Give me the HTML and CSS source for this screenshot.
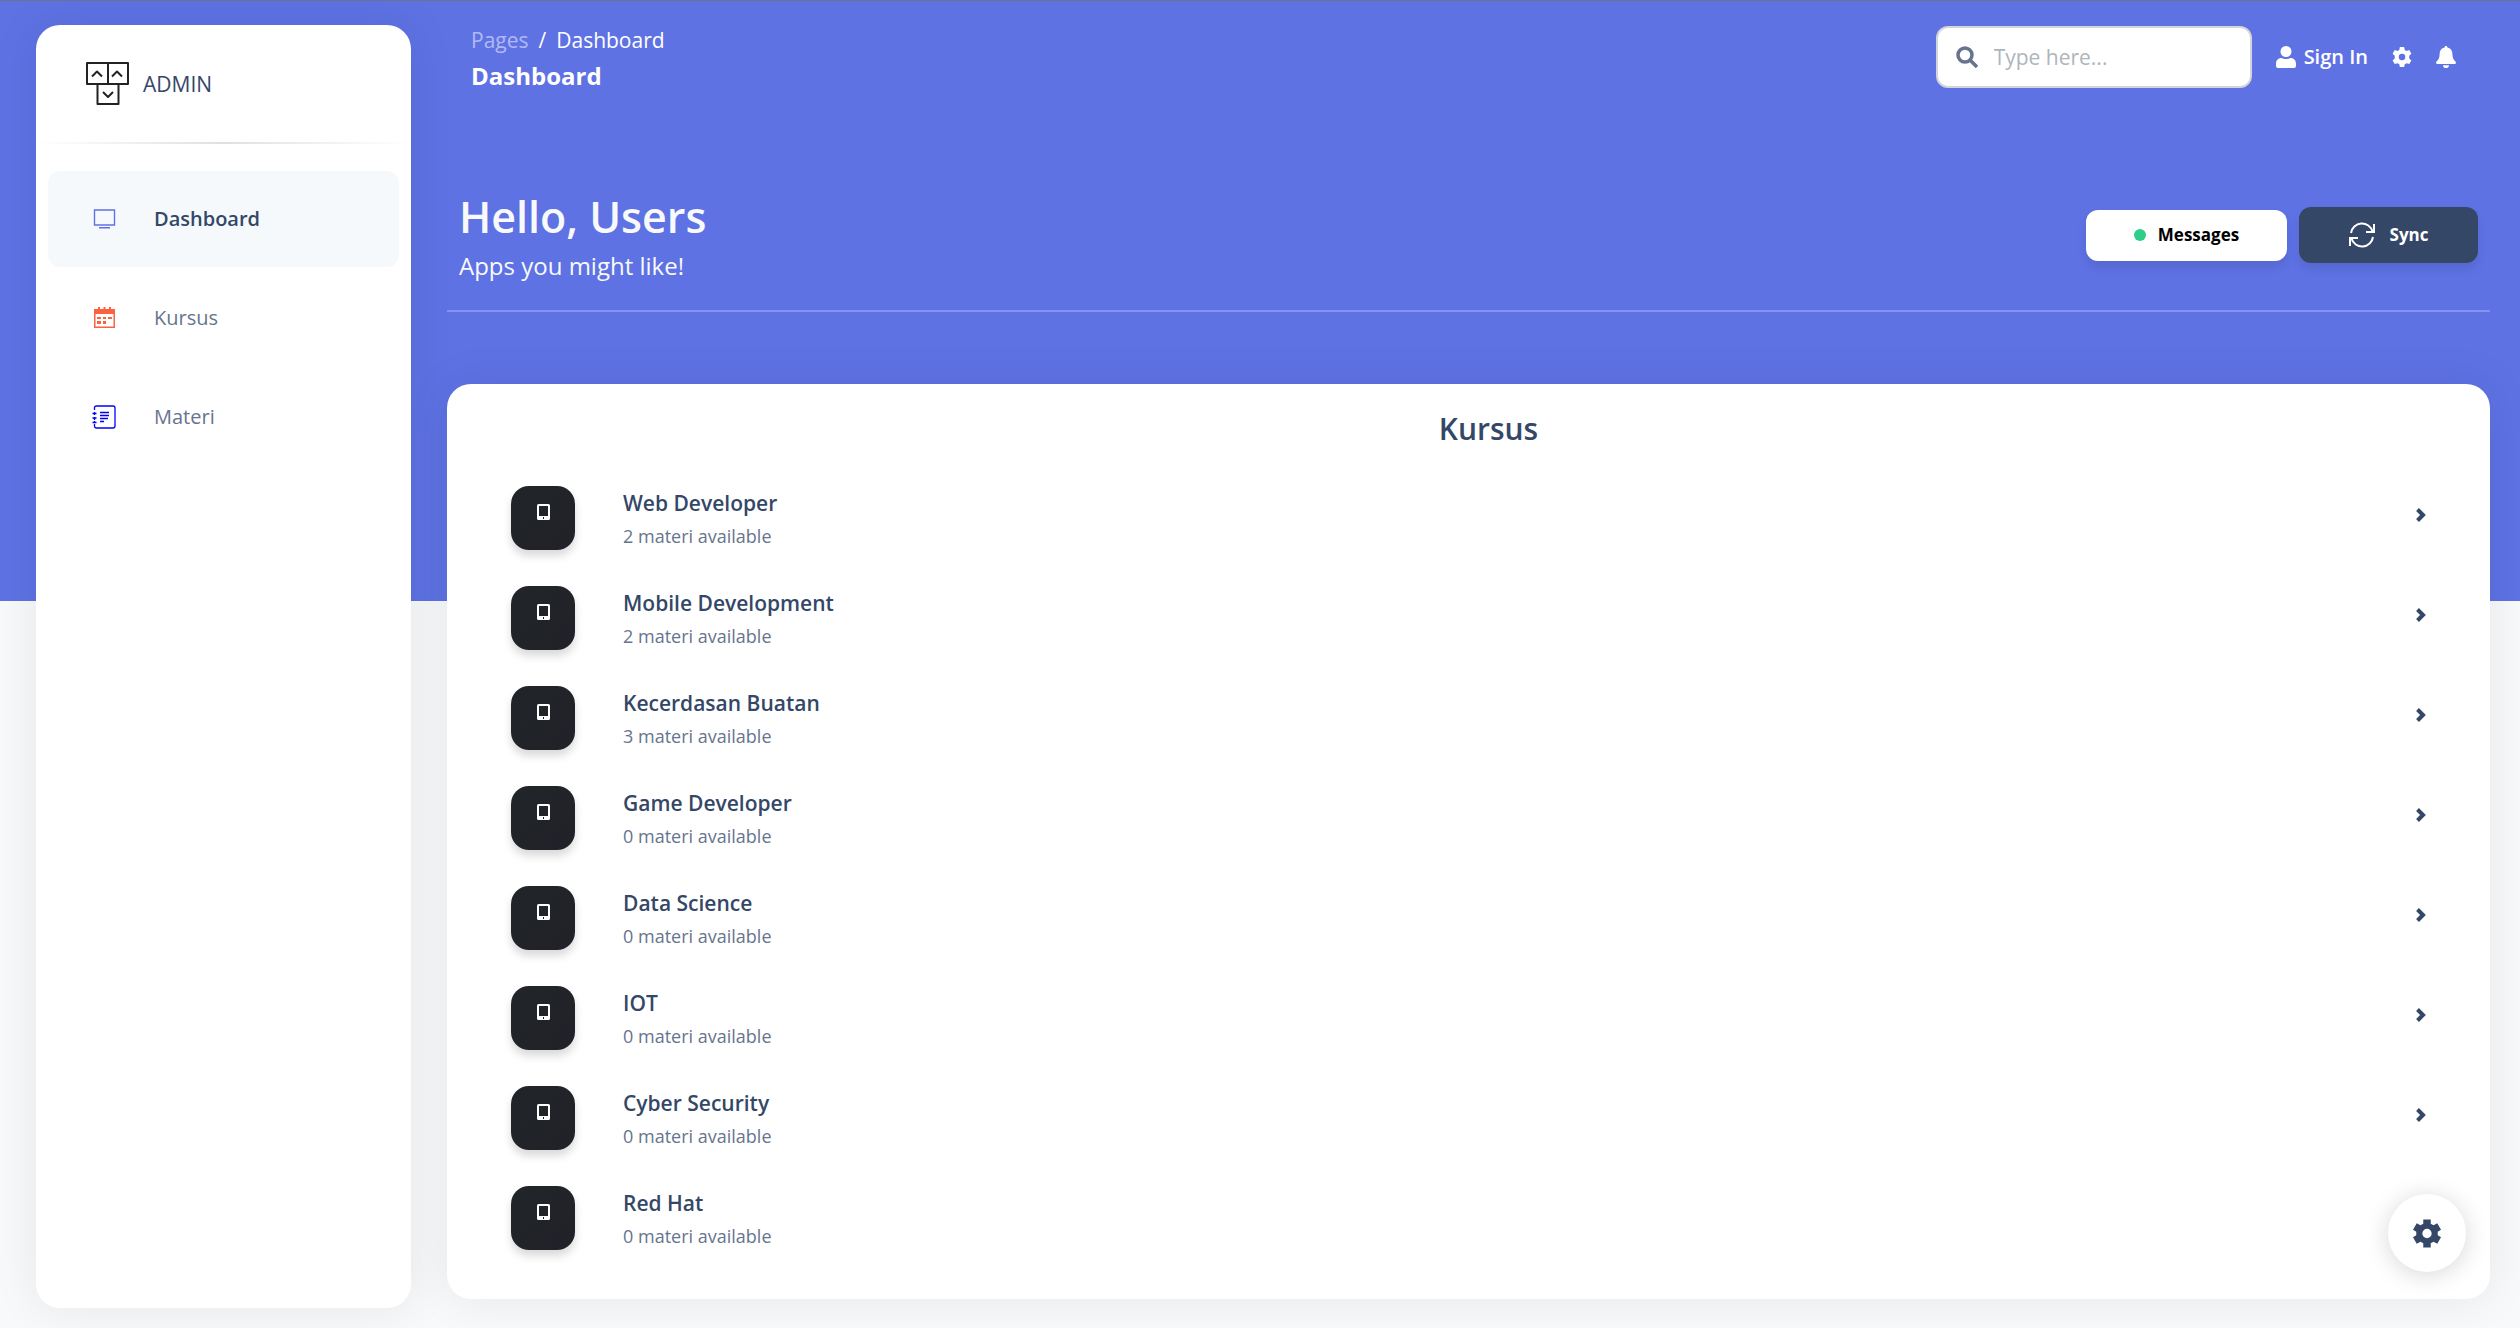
FILE: index.html
```html
<!DOCTYPE html>
<html lang="id">
<head>
<meta charset="utf-8">
<meta name="viewport" content="width=device-width, initial-scale=1">
<title>Dashboard</title>
<link rel="stylesheet" href="styles.css">
</head>
<body>
<svg class="sprite" aria-hidden="true">
  <symbol id="tablet" viewBox="0 0 13 16">
    <path fill="currentColor" fill-rule="evenodd" d="M1.500 0h10A1.500 1.500 0 0 1 13 1.500v13a1.500 1.500 0 0 1-1.500 1.500h-10A1.500 1.500 0 0 1 0 14.500v-13A1.500 1.500 0 0 1 1.500 0zM2 2v10h9V2zM6 13v2h1v-2z"/>
  </symbol>
  <symbol id="chevron" viewBox="0 0 10 14">
    <path fill="none" stroke="currentColor" stroke-width="4" d="M1.500 1.500 7 7l-5.500 5.500"/>
  </symbol>
</svg>

<aside class="sidebar">
  <a class="brand" href="#">
    <svg class="brand-logo" viewBox="0 0 44 44" fill="none" stroke="#222" stroke-width="2" stroke-linejoin="round" aria-hidden="true">
      <path d="M1 1h21v21H1zM22 1h20v21H22zM11.500 22h21v20h-21z"/>
      <path d="M6 14.500l5-5 5 5M26 14.500l5-5 5 5M17 30l5 5 5-5"/>
    </svg>
    <span>ADMIN</span>
  </a>
  <hr class="fade-line">
  <nav class="menu">
    <a class="menu-item active" href="#">
      <svg viewBox="0 0 24 24" fill="none" stroke="#5e72e4" stroke-width="1.400" aria-hidden="true"><path d="M2.500 3h20v15h-20zM7 20.800h11"/></svg>
      <span>Dashboard</span>
    </a>
    <a class="menu-item" href="#">
      <svg viewBox="0 0 24 24" aria-hidden="true"><path fill="#fb6340" fill-rule="evenodd" d="M2 3h4V1h2v2h3.500V1h2v2H17V1h2v2h4v19H2zM3.500 8v12.500h18V8z"/><path fill="#fb6340" d="M5 11h4v2H5zm6 0h3v2h-3zm5 0h4v2h-4zM5 15h4v3H5zm6 0h3v3h-3z"/></svg>
      <span>Kursus</span>
    </a>
    <a class="menu-item" href="#">
      <svg viewBox="0 0 24 24" fill="none" stroke="#0000ff" stroke-width="1.300" aria-hidden="true"><path d="M2.500 5V3q0-2 2-2H21q2 0 2 2v18q0 2-2 2H4.500q-2 0-2-2v-2M2.500 7v3M2.500 12v3M2.500 16v2M.5 8.500h4M.5 13h4M.5 17.500h4M8 7.500h9M8 10.500h9M8 13.500h8M8 16.500h4"/></svg>
      <span>Materi</span>
    </a>
  </nav>
</aside>

<main class="main">
  <header class="topbar">
    <div>
      <nav class="crumbs" aria-label="Breadcrumb"><a href="#">Pages</a><span>/</span><span>Dashboard</span></nav>
      <h6 class="page-name">Dashboard</h6>
    </div>
    <div class="tools">
      <label class="search">
        <svg viewBox="0 0 22 22" fill="none" stroke="currentColor" stroke-width="3.500" aria-hidden="true"><circle cx="9" cy="9" r="7"/><path d="M14 14l7 7"/></svg>
        <input type="text" placeholder="Type here..." aria-label="Search">
      </label>
      <a class="tool" href="#">
        <svg viewBox="0 0 20 22" fill="currentColor" aria-hidden="true"><circle cx="10" cy="5.500" r="5.500"/><path d="M5.500 12c1.500.8 2.800 1 4.500 1s3-.2 4.500-1c3.500 0 5.500 2.500 5.500 5.500V20a2 2 0 0 1-2 2H2a2 2 0 0 1-2-2v-2.500C0 14.500 2 12 5.500 12z"/></svg>
        <span>Sign In</span>
      </a>
      <a class="tool" href="#" aria-label="Settings">
        <svg viewBox="2 2 16 16" aria-hidden="true"><path fill="currentColor" fill-rule="evenodd" d="M8.300 2h3.400l.5 2.300 1.400.8 2.200-.7 1.700 2.900-1.700 1.600v2.200l1.700 1.600-1.700 2.900-2.200-.7-1.400.8-.5 2.300H8.300l-.5-2.300-1.400-.8-2.200.7-1.700-2.900 1.700-1.600V8.900L2.500 7.300l1.700-2.900 2.200.7 1.400-.8zM10 7.400a2.600 2.600 0 1 0 0 5.200 2.600 2.600 0 0 0 0-5.200z"/></svg>
      </a>
      <a class="tool" href="#" aria-label="Notifications">
        <svg viewBox="0 0 20 22" fill="currentColor" aria-hidden="true"><path d="M10 0c.9 0 1.400.6 1.400 1.500 3.300.7 5 3.200 5 6.500 0 4 1 5.500 3 7.500 1 1 .4 2.500-.9 2.500h-17C.2 18-.4 16.500.6 15.500c2-2 3-3.500 3-7.500 0-3.300 1.700-5.800 5-6.500C8.600.6 9.100 0 10 0zM7 19.200h6a3 2.800 0 0 1-6 0z"/></svg>
      </a>
    </div>
  </header>

  <section class="hero">
    <div>
      <h1>Hello, Users</h1>
      <p>Apps you might like!</p>
    </div>
    <div class="actions">
      <button class="btn btn-light" type="button"><span class="dot"></span>Messages</button>
      <button class="btn btn-dark" type="button">
        <svg viewBox="0 0 26 26" fill="none" stroke="currentColor" stroke-width="2" aria-hidden="true"><path d="M2 11A11 11 0 0 1 23.500 9.500M25 2v8h-8M24 15A11 11 0 0 1 2.500 16.500M1 24v-8h8"/></svg>
        Sync
      </button>
    </div>
  </section>

  <section class="card">
    <h2>Kursus</h2>
    <ul class="courses">
      <li><span class="tile"><svg><use href="#tablet"/></svg></span><div class="info"><h3>Web Developer</h3><p>2 materi available</p></div><button class="go" type="button" aria-label="Open Web Developer"><svg><use href="#chevron"/></svg></button></li>
      <li><span class="tile"><svg><use href="#tablet"/></svg></span><div class="info"><h3>Mobile Development</h3><p>2 materi available</p></div><button class="go" type="button" aria-label="Open Mobile Development"><svg><use href="#chevron"/></svg></button></li>
      <li><span class="tile"><svg><use href="#tablet"/></svg></span><div class="info"><h3>Kecerdasan Buatan</h3><p>3 materi available</p></div><button class="go" type="button" aria-label="Open Kecerdasan Buatan"><svg><use href="#chevron"/></svg></button></li>
      <li><span class="tile"><svg><use href="#tablet"/></svg></span><div class="info"><h3>Game Developer</h3><p>0 materi available</p></div><button class="go" type="button" aria-label="Open Game Developer"><svg><use href="#chevron"/></svg></button></li>
      <li><span class="tile"><svg><use href="#tablet"/></svg></span><div class="info"><h3>Data Science</h3><p>0 materi available</p></div><button class="go" type="button" aria-label="Open Data Science"><svg><use href="#chevron"/></svg></button></li>
      <li><span class="tile"><svg><use href="#tablet"/></svg></span><div class="info"><h3>IOT</h3><p>0 materi available</p></div><button class="go" type="button" aria-label="Open IOT"><svg><use href="#chevron"/></svg></button></li>
      <li><span class="tile"><svg><use href="#tablet"/></svg></span><div class="info"><h3>Cyber Security</h3><p>0 materi available</p></div><button class="go" type="button" aria-label="Open Cyber Security"><svg><use href="#chevron"/></svg></button></li>
      <li><span class="tile"><svg><use href="#tablet"/></svg></span><div class="info"><h3>Red Hat</h3><p>0 materi available</p></div><button class="go" type="button" aria-label="Open Red Hat"><svg><use href="#chevron"/></svg></button></li>
    </ul>
  </section>
</main>

<button class="fab" type="button" aria-label="Configure">
  <svg viewBox="0 0 30 30" aria-hidden="true"><path fill="currentColor" fill-rule="evenodd" d="M11 0h8v4.500l3 1.700L26 4l4 7-3.500 2.200v3.600L30 19l-4 7-4-2.200-3 1.700V30h-8v-4.500l-3-1.700L4 26l-4-7 3.500-2.200v-3.600L0 11l4-7 4 2.200 3-1.700zM15 10a5 5 0 1 0 0 10 5 5 0 0 0 0-10z"/></svg>
</button>
</body>
</html>
```
FILE: styles.css
```css
* { box-sizing: border-box; }
body {
  margin: 0;
  min-height: 100vh;
  padding: 24px 30px 20px 36px;
  display: flex;
  gap: 36px;
  border-top: 1px solid #67748e;
  background: linear-gradient(#5e72e4, #5e72e4) 0 0 / 100% 601px no-repeat #f8f9fa;
  font-family: "Open Sans", "Noto Sans", sans-serif;
  font-size: 21px;
  line-height: 32px;
  color: #344767;
}
h1, h2, h3, h6, p, ul { margin: 0; padding: 0; }
a { color: inherit; text-decoration: none; }
button, input { font: inherit; color: inherit; border: 0; }
button { cursor: pointer; }
svg { display: block; flex: none; }
.sprite { position: absolute; width: 0; height: 0; }

.sidebar, .card {
  background: #fff;
  border-radius: 24px;
  box-shadow: 0 0 48px rgba(0, 0, 0, .08);
}
.sidebar { flex: 0 0 375px; }
.brand {
  display: flex;
  align-items: center;
  gap: 13px;
  height: 117px;
  padding-left: 50px;
  font-size: 21px;
  font-weight: 500;
}
.brand-logo { width: 44px; height: 44px; }
.fade-line {
  height: 2px;
  margin: 0 0 27px;
  border: 0;
  background: linear-gradient(90deg, transparent, #e0e0e0, transparent);
}
.menu { display: grid; gap: 3px; padding: 0 12px; }
.menu-item {
  display: flex;
  align-items: center;
  gap: 38px;
  height: 96px;
  padding-left: 44px;
  border-radius: 12px;
  font-size: 20px;
  color: #67748e;
}
.menu-item svg { width: 24px; height: 24px; }
.menu-item.active { background: #f5f9fc; color: #344767; font-weight: 600; }

.main { flex: 1; min-width: 0; }
.topbar {
  display: flex;
  justify-content: space-between;
  align-items: flex-start;
  padding: 0 34px 0 24px;
  color: #fff;
}
.crumbs { display: flex; gap: 10px; line-height: 30px; }
.crumbs a { opacity: .5; }
.page-name { font-size: 24px; line-height: 42px; font-weight: 700; }
.tools { display: flex; align-items: center; gap: 24px; padding-top: 1px; }
.search {
  display: flex;
  align-items: center;
  gap: 16px;
  width: 316px;
  height: 62px;
  padding: 0 18px;
  border: 2px solid #d2d6da;
  border-radius: 12px;
  background: #fff;
  color: #67748e;
}
.search svg { width: 22px; height: 22px; }
.search input { flex: 1; min-width: 0; padding: 0; outline: 0; background: none; }
.search input::placeholder { color: #adb5bd; opacity: 1; }
.tool { display: flex; align-items: center; gap: 8px; font-size: 20px; font-weight: 600; }
.tool svg { width: 20px; height: 22px; }

.hero {
  display: flex;
  justify-content: space-between;
  align-items: center;
  height: 152px;
  margin: 63px 0 72px;
  padding: 0 12px;
  border-bottom: 2px solid #8392ef;
  color: #f8f9fa;
}
.hero h1 { font-size: 43px; line-height: 62px; font-weight: 600; }
.hero p { font-size: 24px; line-height: 36px; }
.actions { display: flex; align-items: center; gap: 12px; }
.btn {
  display: flex;
  align-items: center;
  justify-content: center;
  border-radius: 12px;
  box-shadow: 0 6px 9px rgba(50, 50, 93, .15);
  font-size: 17px;
  font-weight: 700;
}
.btn-light { gap: 12px; width: 201px; height: 51px; background: #fff; color: #000; }
.btn-dark { gap: 15px; width: 179px; height: 56px; background: #344767; color: #fff; }
.btn svg { width: 26px; height: 26px; }
.dot { width: 12px; height: 12px; border-radius: 50%; background: #2dce89; }

.card { padding: 24px 40px 49px 64px; }
.card h2 { padding-left: 16px; font-size: 30px; line-height: 42px; font-weight: 600; text-align: center; }
.courses { display: grid; gap: 36px; padding-top: 36px; list-style: none; }
.courses li { display: flex; align-items: flex-start; gap: 48px; height: 64px; }
.tile {
  width: 64px;
  height: 64px;
  padding: 18px 0 0 26px;
  border-radius: 18px;
  background: linear-gradient(310deg, #212229, #212529);
  box-shadow: 0 6px 9px rgba(0, 0, 0, .15);
  color: #fff;
}
.tile svg { width: 13px; height: 16px; }
.info { flex: 1; }
.info h3 { font-size: 21px; line-height: 34px; font-weight: 600; }
.info p { font-size: 18px; line-height: 32px; color: #67748e; }
.go { display: grid; place-items: center; width: 58px; height: 58px; padding: 0; background: none; }
.go svg { width: 10px; height: 14px; }

.fab {
  position: fixed;
  right: 54px;
  bottom: 56px;
  display: grid;
  place-items: center;
  width: 78px;
  height: 78px;
  padding: 0;
  border-radius: 50%;
  background: #fff;
  box-shadow: 0 3px 24px rgba(0, 0, 0, .16);
}
.fab svg { width: 28px; height: 29px; }
```
